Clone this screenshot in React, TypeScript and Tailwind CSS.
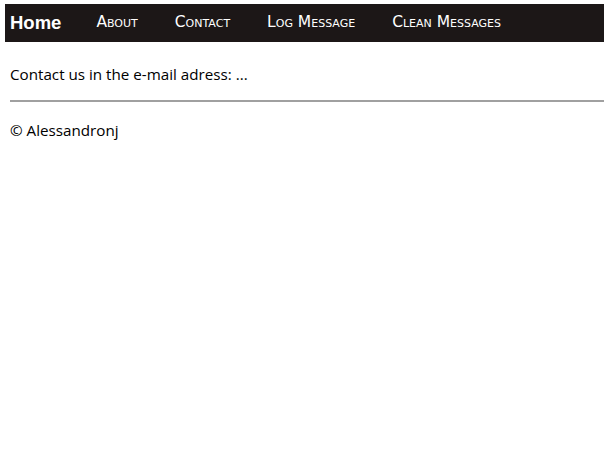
export default function App() {
  const links = ["About", "Contact", "Log Message", "Clean Messages"];
  return (
    <div className="min-h-screen bg-white pt-1 text-black" style={{ fontFamily: '"Open Sans", sans-serif' }}>
      <nav className="ml-[5px] flex h-[38px] items-center bg-[#1c1717] pl-[5px]">
        <span className="text-[18.5px] font-bold text-white" style={{ fontFamily: '"Liberation Sans", Arial, sans-serif' }}>
          Home
        </span>
        <ul className="ml-[35px] flex gap-[37px]">
          {links.map((l) => (
            <li
              key={l}
              className="text-[15.5px] font-medium text-white [font-variant:small-caps]"
              style={{ fontFamily: '"DejaVu Sans", sans-serif' }}
            >
              {l}
            </li>
          ))}
        </ul>
      </nav>
      <div className="pl-[10px]">
        <p className="mt-[21px] text-[15.2px]">Contact us in the e-mail adress: ...</p>
        <hr className="mt-[14px] border-t-2 border-[#a0a0a0]" />
        <p className="mt-[17px] text-[15.2px]">© Alessandronj</p>
      </div>
    </div>
  );
}
